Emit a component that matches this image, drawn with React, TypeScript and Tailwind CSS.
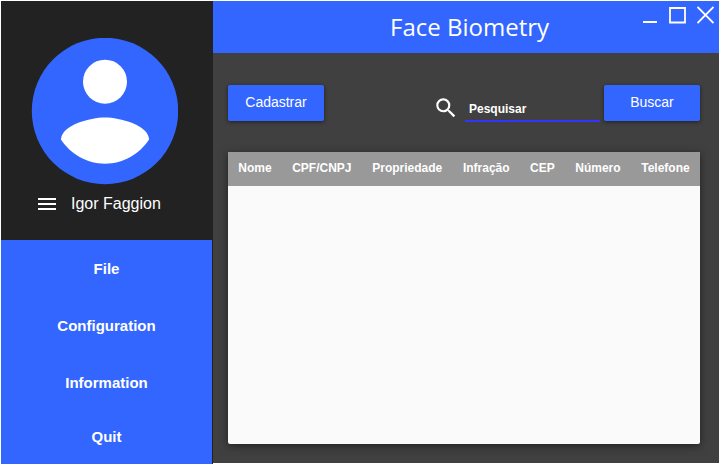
import React from "react";
import { MdSearch } from "react-icons/md";

const menuItems = ["File", "Configuration", "Information", "Quit"];

const columns = ["Nome", "CPF/CNPJ", "Propriedade", "Infração", "CEP", "Número", "Telefone"];

function Avatar() {
  return (
    <svg viewBox="0 0 147 147" className="size-[147px]" role="img" aria-label="Igor Faggion">
      <circle cx="74" cy="73" r="73.200" fill="#3366ff" />
      <circle cx="74" cy="43.700" r="22" fill="#fff" />
      <path
        d="M30 101.500C30.300 87 59.300 79.500 74 79.500C88.600 79.500 117.700 87 118 101.500C108.500 116 92.500 125.700 74 125.700C55.500 125.700 39.500 116 30 101.500Z"
        fill="#fff"
      />
    </svg>
  );
}

function Sidebar() {
  return (
    <aside className="flex w-[212px] shrink-0 flex-col bg-[#222222] pr-px">
      <div className="flex h-[239px] flex-col pt-[37px]">
        <div className="pl-[30px]">
          <Avatar />
        </div>
        <div className="flex items-center gap-[15px] pt-[7px] pl-[37px]">
          <button type="button" aria-label="Menu">
            <svg width="18" height="12" viewBox="0 0 18 12" fill="#fff" className="block">
              <path d="M0 0h18v2H0zM0 5h18v2H0zM0 10h18v2H0z" />
            </svg>
          </button>
          <span className="text-base leading-6 text-white">Igor Faggion</span>
        </div>
      </div>
      <nav className="flex flex-1 flex-col bg-[#3366ff]">
        {menuItems.map((item) => (
          <button
            key={item}
            type="button"
            className="h-[57px] pt-0.5 text-[15px] font-bold text-white last:h-auto last:flex-1 last:pt-0"
          >
            {item}
          </button>
        ))}
      </nav>
    </aside>
  );
}

function TitleBar() {
  return (
    <header className="flex h-[52px] bg-[#3366ff] pl-3 text-white">
      <div className="flex-1" />
      <h1 className="self-center font-['Open_Sans',sans-serif] text-2xl leading-8">Face Biometry</h1>
      <div className="flex flex-1 items-start justify-end gap-[11px] pt-[5px] pr-[5px]">
        <button type="button" aria-label="Minimize">
          <svg width="15" height="18" viewBox="0 0 15 18" className="block">
            <path d="M0 16h14" stroke="#fff" strokeWidth="2" />
          </svg>
        </button>
        <button type="button" aria-label="Maximize">
          <svg width="17" height="18" viewBox="0 0 17 18" className="block">
            <path d="M1 2h15v14.500H1z" fill="none" stroke="#fff" strokeWidth="1.800" />
          </svg>
        </button>
        <button type="button" aria-label="Close">
          <svg width="17" height="18" viewBox="0 0 17 18" className="block">
            <path d="M0.500 1l16 16M16.500 1l-16 16" stroke="#fff" strokeWidth="1.800" />
          </svg>
        </button>
      </div>
    </header>
  );
}

function ActionButton({ children }: { children: React.ReactNode }) {
  return (
    <button
      type="button"
      className="h-9 w-24 rounded-xs bg-[#3366ff] pb-0.5 text-sm text-white shadow-[0_1px_4px_rgba(0,0,0,0.5)]"
    >
      {children}
    </button>
  );
}

function Toolbar() {
  return (
    <div className="flex items-start justify-between">
      <ActionButton>Cadastrar</ActionButton>
      <form className="flex items-start gap-1">
        <div className="flex items-start gap-1.5 pt-2.5">
          <label htmlFor="search" aria-label="Pesquisar">
            <MdSearch size={26} color="#fff" className="block" />
          </label>
          <input
            id="search"
            type="text"
            placeholder="Pesquisar"
            className="h-[27px] w-[135px] border-b-2 border-[#3333ff] px-1 pt-0.5 text-xs font-bold text-white outline-none placeholder:text-white"
          />
        </div>
        <ActionButton>Buscar</ActionButton>
      </form>
    </div>
  );
}

function Records() {
  return (
    <section className="flex-1 rounded-b-xs bg-[#fafafa] shadow-[0_2px_8px_rgba(0,0,0,0.5)]">
      <table className="w-full border-collapse bg-[#999999] text-xs text-white">
        <thead>
          <tr className="h-[34px]">
            {columns.map((column) => (
              <th key={column} scope="col" className="px-2.5 pb-0.5 text-center font-bold">
                {column}
              </th>
            ))}
          </tr>
        </thead>
      </table>
    </section>
  );
}

export default function App() {
  return (
    <div className="flex min-h-screen bg-white pt-px pr-0.5 pb-px pl-px font-['Liberation_Sans',Arial,sans-serif]">
      <Sidebar />
      <div className="mb-px flex min-w-0 flex-1 flex-col bg-[#404040]">
        <TitleBar />
        <main className="flex flex-1 flex-col gap-[30px] pt-8 pr-[19px] pb-[19px] pl-[15px]">
          <Toolbar />
          <Records />
        </main>
      </div>
    </div>
  );
}
